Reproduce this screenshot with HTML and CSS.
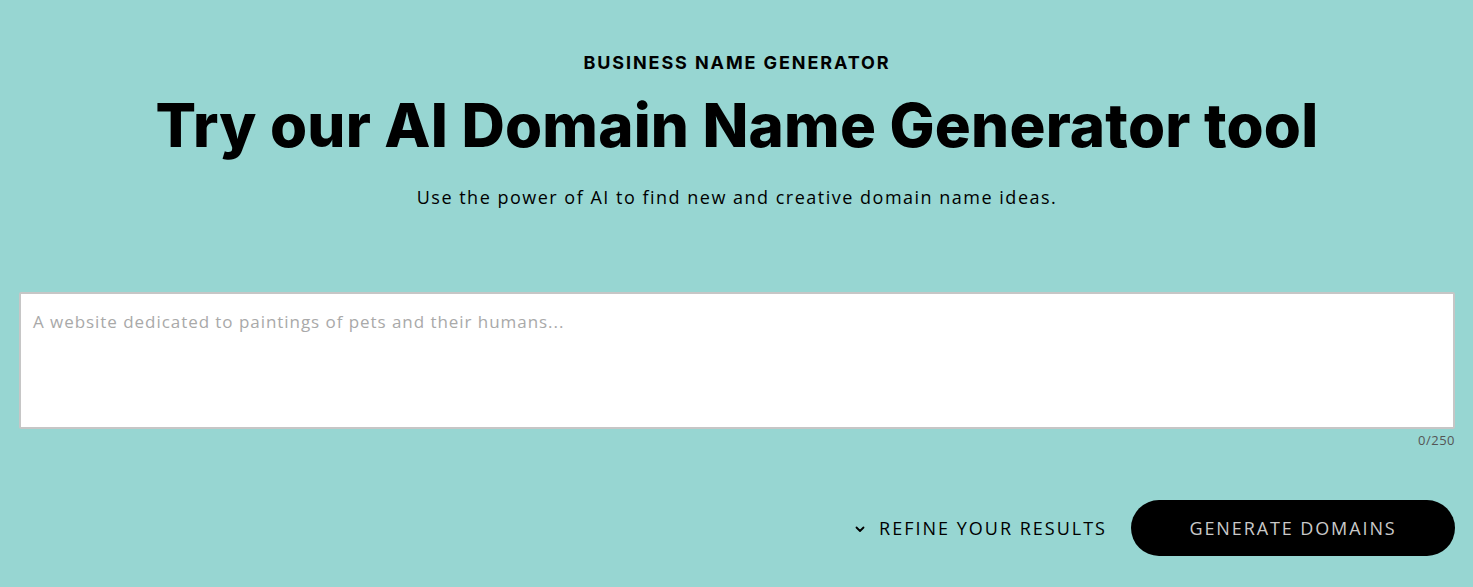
FILE: index.html
```html
<!DOCTYPE html>
<html lang="en">
<head>
<meta charset="utf-8">
<title>Business Name Generator</title>
<link rel="stylesheet" href="styles.css">
</head>
<body>
<main class="page">
  <header class="hero">
    <p class="eyebrow">BUSINESS NAME GENERATOR</p>
    <h1 class="title">Try our AI Domain Name Generator tool</h1>
    <p class="subtitle">Use the power of AI to find new and creative domain name ideas.</p>
  </header>
  <section class="form">
    <textarea class="prompt" placeholder="A website dedicated to paintings of pets and their humans..."></textarea>
    <div class="counter">0/250</div>
    <div class="actions">
      <button class="refine" type="button">
        <svg class="chev" width="10" height="7" viewBox="0 0 10 7"><path d="M1.5 1.5 L5 5 L8.5 1.5" fill="none" stroke="#000" stroke-width="1.8" stroke-linecap="round" stroke-linejoin="round"/></svg>
        <span>REFINE YOUR RESULTS</span>
      </button>
      <button class="generate" type="button">GENERATE DOMAINS</button>
    </div>
  </section>
</main>
</body>
</html>
```

FILE: styles.css
```css
html, body {
  margin: 0;
  padding: 0;
  background: #97d6d2;
}
body {
  font-family: "Open Sans", "DejaVu Sans", sans-serif;
  color: #000;
}
.page {
  padding: 0 18px 0 19px;
}
.hero {
  display: flex;
  flex-direction: column;
  align-items: center;
  text-align: center;
  padding-top: 52px;
}
.eyebrow {
  margin: 0;
  font-family: "Inter", sans-serif;
  font-weight: 700;
  font-size: 18px;
  letter-spacing: 1.9px;
  line-height: 22px;
}
.title {
  margin: 15px 0 0;
  font-family: "Inter", sans-serif;
  font-weight: 800;
  font-size: 60px;
  line-height: 72px;
  letter-spacing: 0.2px;
}
.subtitle {
  margin: 24px 0 0;
  font-size: 18px;
  line-height: 24px;
  letter-spacing: 1.5px;
}
.form {
  margin-top: 83px;
  display: flex;
  flex-direction: column;
}
.prompt {
  display: block;
  box-sizing: border-box;
  width: 100%;
  height: 137px;
  margin: 0;
  padding: 17px 12px;
  border: 2px solid #c6c6c6;
  border-radius: 2px;
  background: #fff;
  resize: none;
  font-family: "Open Sans", sans-serif;
  font-size: 17px;
  line-height: 22px;
  letter-spacing: 0.95px;
  outline: none;
}
.prompt::placeholder {
  color: #a9a9a9;
}
.counter {
  align-self: flex-end;
  margin-top: 3px;
  font-size: 13px;
  line-height: 16px;
  letter-spacing: 0.5px;
  color: #555;
}
.actions {
  margin-top: 52px;
  display: flex;
  justify-content: flex-end;
  align-items: center;
  gap: 24px;
}
.refine {
  display: flex;
  align-items: center;
  gap: 14px;
  background: none;
  border: 0;
  padding: 0;
  font-family: "Open Sans", sans-serif;
  font-size: 18px;
  font-weight: 500;
  letter-spacing: 2px;
  color: #000;
  cursor: pointer;
}
.chev {
  display: block;
  margin-top: 2px;
}
.generate {
  width: 324px;
  height: 56px;
  border: 0;
  border-radius: 28px;
  background: #000;
  color: #c9c9c9;
  font-family: "Open Sans", sans-serif;
  font-size: 18px;
  letter-spacing: 1.9px;
  cursor: pointer;
}
```
